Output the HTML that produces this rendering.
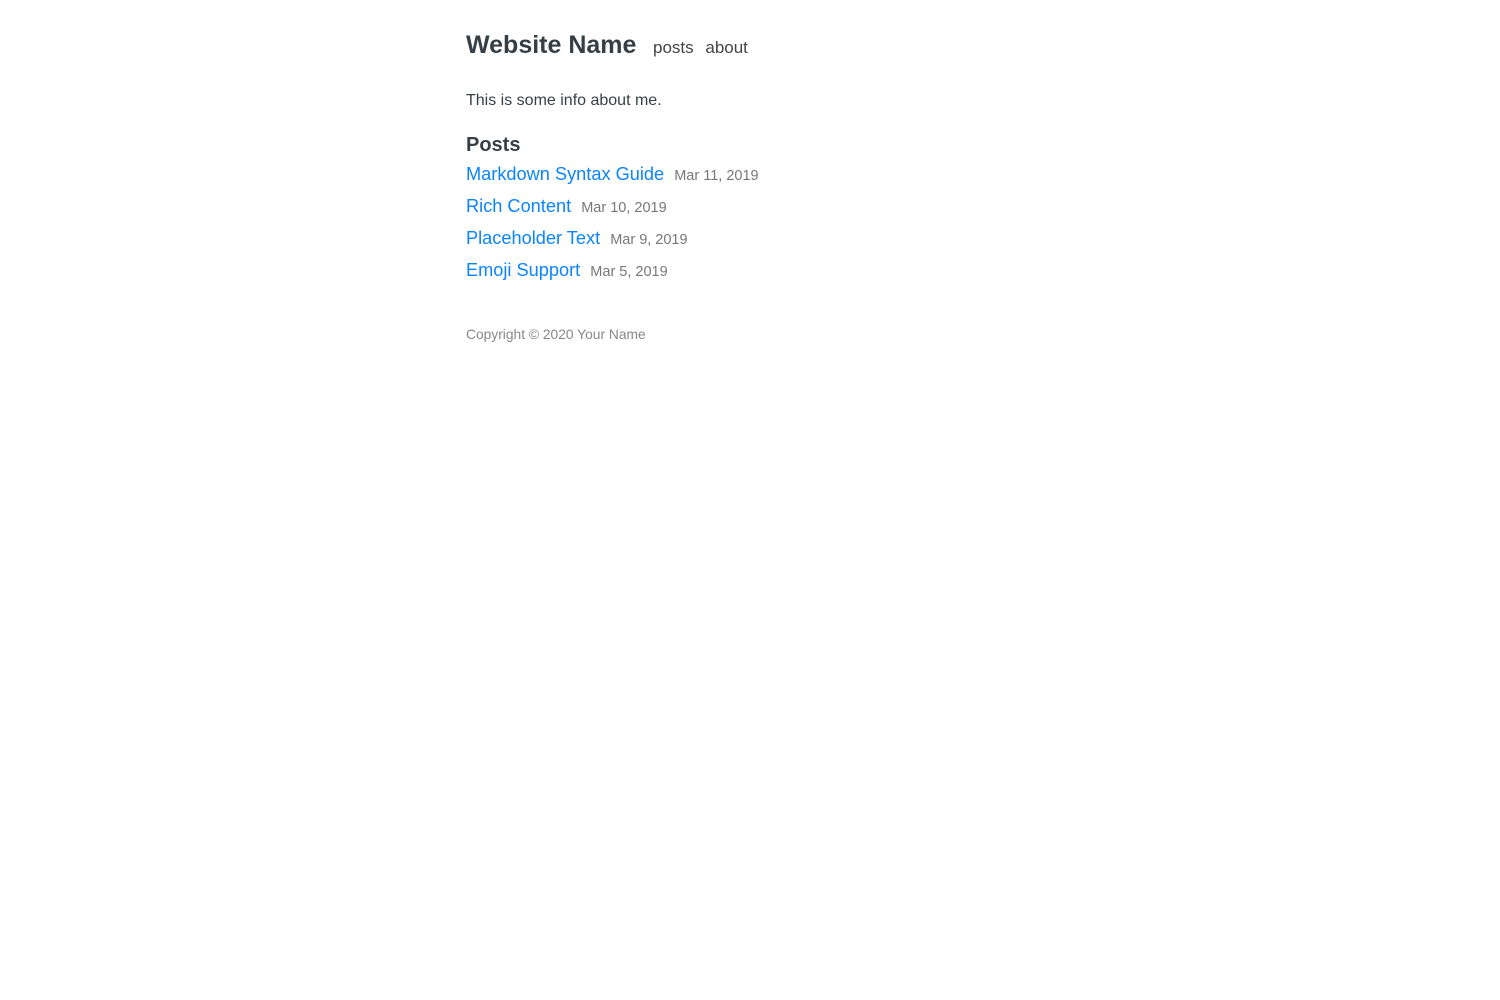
<!DOCTYPE html>
<html><head><meta charset="utf-8"><style>
body{margin:0;background:#fff;font-family:"Liberation Sans",Helvetica,Arial,sans-serif;color:#363f45;}
.wrap{position:absolute;left:466px;top:0;width:600px;}
.title{position:absolute;top:31px;left:0;font-size:25px;font-weight:bold;white-space:nowrap;}
.nav{position:absolute;top:38px;left:187px;font-size:17px;white-space:nowrap;color:#444;}
.nav span{margin-right:7px}
.info{position:absolute;top:92px;left:0;font-size:16px;white-space:nowrap;}
.posts{position:absolute;top:134px;left:0;font-size:20px;font-weight:bold;}
.p{position:absolute;left:0;font-size:18.2px;color:#0a84ff;white-space:nowrap;}
.p small{font-size:14.5px;color:#777;margin-left:5px;}
.foot{position:absolute;top:327px;left:0;font-size:13.8px;color:#888;white-space:nowrap;}
</style></head><body><div class="wrap">
<div class="title">Website Name</div>
<div class="nav"><span>posts</span> about</div>
<div class="info">This is some info about me.</div>
<div class="posts">Posts</div>
<div class="p" style="top:164px">Markdown Syntax Guide <small>Mar 11, 2019</small></div>
<div class="p" style="top:196px">Rich Content <small>Mar 10, 2019</small></div>
<div class="p" style="top:228px">Placeholder Text <small>Mar 9, 2019</small></div>
<div class="p" style="top:260px">Emoji Support <small>Mar 5, 2019</small></div>
<div class="foot">Copyright © 2020 Your Name</div>
</div></body></html>
